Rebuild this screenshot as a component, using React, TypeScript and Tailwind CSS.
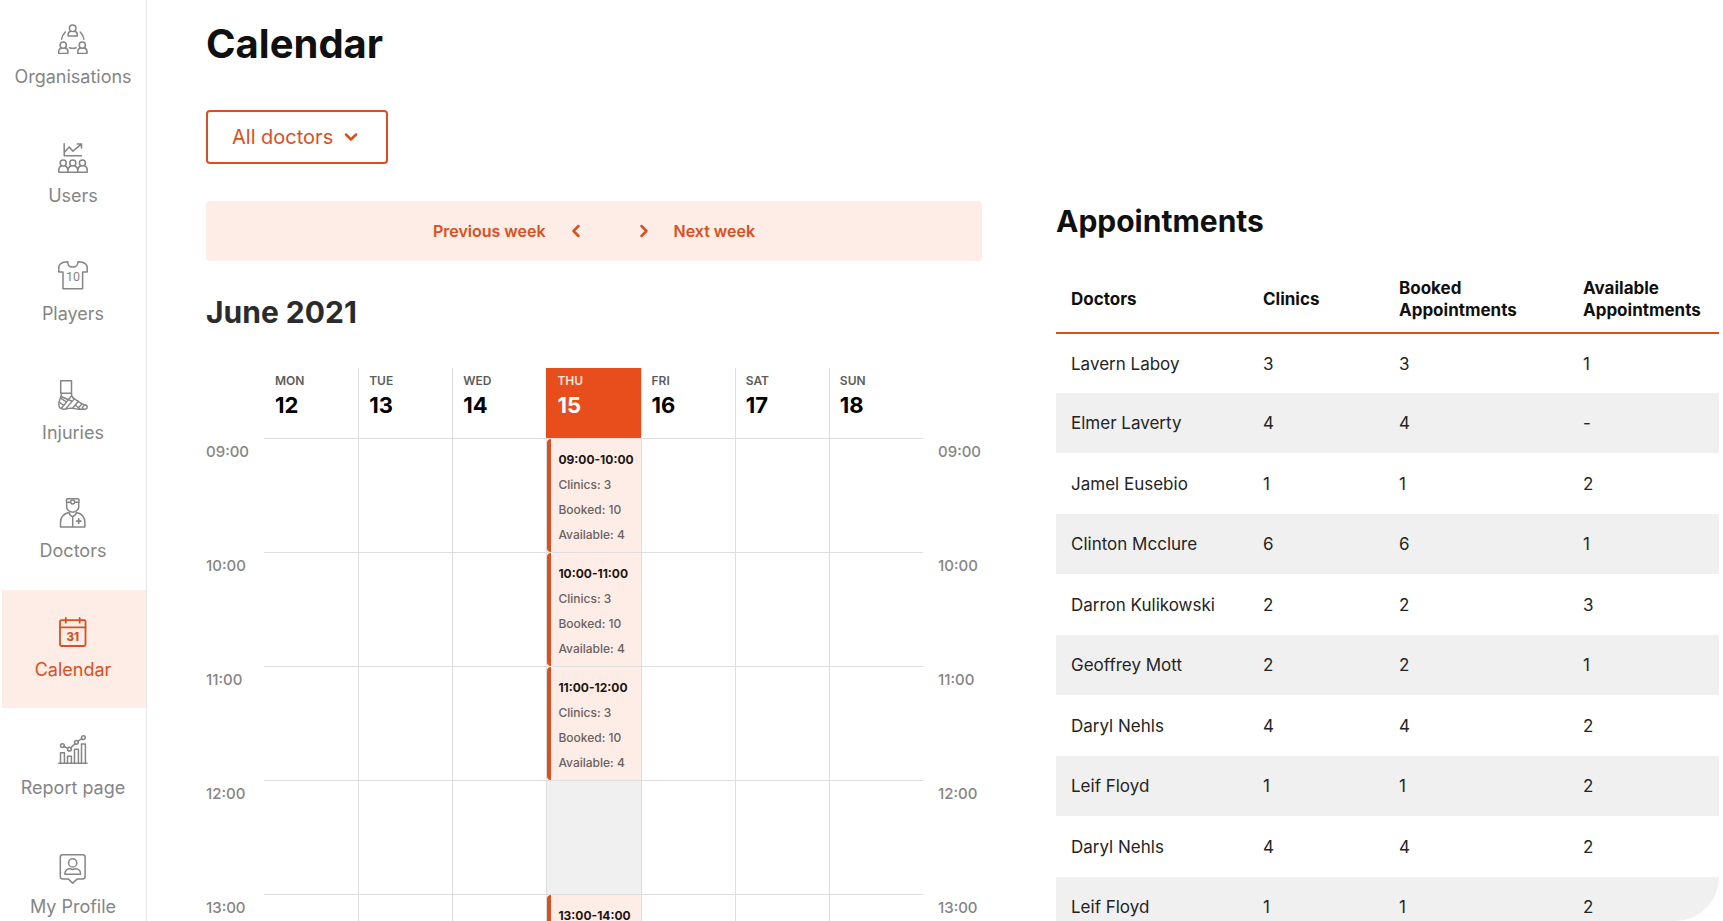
import React from "react";
import { ChevronDown, ChevronLeft, ChevronRight } from "lucide-react";

function Icon({ children }: { children: React.ReactNode }) {
  return (
    <svg
      viewBox="0 0 30 30"
      className="size-[30px]"
      fill="none"
      stroke="currentColor"
      strokeWidth="1.5"
      strokeLinecap="round"
      strokeLinejoin="round"
      aria-hidden="true"
    >
      {children}
    </svg>
  );
}

const OrganisationsIcon = () => (
  <Icon>
    <circle cx="14.7" cy="4.2" r="3.3" />
    <path d="M12.8 7.2c-1.8.5-2.700 1.600-2.700 3.200v1.600h9.200v-1.600c0-1.600-.9-2.700-2.700-3.200" />
    <circle cx="5.2" cy="21.2" r="3.1" />
    <path d="M3.4 24c-1.8.5-2.7 1.8-2.7 3.4v2h9.200v-2c0-1.600-.9-2.900-2.700-3.400" />
    <circle cx="24.3" cy="21.2" r="3.1" />
    <path d="M22.500 24c-1.800.5-2.700 1.800-2.700 3.400v2H29v-2c0-1.600-.9-2.900-2.700-3.400" />
    <path d="M7.300 8C5.300 10 4 12.500 3.600 15.200M22.200 8c2 2 3.300 4.500 3.700 7.200M11.300 23.800c2.200.7 4.700.7 6.900 0" />
  </Icon>
);

const UsersIcon = () => (
  <Icon>
    <path d="M6.200.8v12h17.300" />
    <path d="M6.700 9l4.600-5 3.600 4.200 8.400-7M19.300.9h4.200v4" />
    <circle cx="5.200" cy="20" r="3" />
    <circle cx="14.800" cy="20" r="3" />
    <circle cx="24.400" cy="20" r="3" />
    <path d="M3.500 22.700C1.600 23.500.8 25 .8 27v2.200h28.400V27c0-2-.8-3.500-2.700-4.300M7 22.700c1.800.8 2.800 2.300 2.900 4.300v2.200M13.100 22.700c-1.900.8-2.900 2.100-3.200 4.300M16.600 22.700c1.900.8 2.900 2.100 3.200 4.300v2.200M22.700 22.700c-1.900.8-2.700 2.100-2.900 4.300" />
  </Icon>
);

const PlayersIcon = () => (
  <Icon>
    <path d="M9.700.8 5.600 1.300C3.300 2 1.300 3.600.8 5.600V11H5v16.700h19.600V11h4.600V5.600c-.5-2-2.500-3.600-4.800-4.300L20 .8c0 3.300-2 5.300-5.200 5.300S9.700 4.100 9.700.8z" />
    <text
      x="15"
      y="20.300"
      textAnchor="middle"
      fontSize="12.500"
      fill="currentColor"
      stroke="none"
      className="font-['Liberation_Sans_Narrow','Roboto',sans-serif]"
    >
      10
    </text>
  </Icon>
);

const InjuriesIcon = () => (
  <Icon>
    <path d="M2.700.8h10.800v12.400H2.700z" />
    <g strokeWidth="1.400">
      <path d="M3.500 13.200c0 3.800-2.700 7.300-2.700 11 0 3.400 2.200 5 5.200 5 3.300 0 3.700-1 6.300-1h1.700c2 0 4 1 7 1h5.200c1.800 0 3-.9 3-2.200 0-1.300-1-2-2.500-2.200-4.700-1.300-7.400-4.400-10.400-6-1.800-1-2.900-2.300-2.900-5.600" />
      <path d="M3 16.500l10.500 4.500M13.400 16l-10 12.300M16.300 18.900l-8.600 9.800M2.500 18.200l6 3.700M1.200 22l4.500 3.500M20.300 21.300l-5.700 6.900M17.300 25l4.500 4M24.200 23.700l-4 4.200M26.500 25l-2.200 2.600.8 1.600" />
    </g>
  </Icon>
);

const DoctorsIcon = () => (
  <Icon>
    <path d="M8.700 4.300 8.300 2.200c0-.9.700-1.500 1.700-1.500h9.400c1 0 1.700.6 1.700 1.500l-.4 2.100M8.700 4.300h3.800M16.900 4.300h3.800" />
    <circle cx="14.700" cy="4" r="2" />
    <path d="M8.700 4.300v5.200c0 1 .6 2 1.500 2.800 1.300 1.300 2.900 1.900 4.500 1.900s3.200-.6 4.500-1.900c.9-.8 1.500-1.800 1.500-2.800V4.300" />
    <path d="M11 14.500c-5 1-8.500 4.700-8.500 10.200v4.200h24.400v-4.200c0-5.500-3.500-9.200-8.500-10.200M11 14.500c.6 2.200 1.800 3.600 3.700 4 1.900-.4 3.100-1.800 3.700-4M14.700 18.500v10.400" />
    <path d="M20.700 20.900v4.400M18.500 23.100h4.400" strokeWidth="1.700" />
  </Icon>
);

const CalendarIcon = () => (
  <Icon>
    <g strokeWidth="1.800">
      <rect x="2" y="3.200" width="25.500" height="25.800" rx="1.500" />
      <path d="M2 10.300h25.500M7.800.9v4.800M21.700.9v4.800" />
    </g>
    <text
      x="14.800"
      y="24"
      textAnchor="middle"
      fontSize="11.500"
      fontWeight="800"
      fill="currentColor"
      stroke="none"
    >
      31
    </text>
  </Icon>
);

const ReportIcon = () => (
  <Icon>
    <path d="M.8 28.300h28.200M2.500 28V17.800h3.900V28M9.500 28v-6.800h3.900V28M16.500 28V14.300h3.900V28M23.500 28V9h3.900v19" />
    <circle cx="4.400" cy="10.600" r="1.900" />
    <circle cx="11.400" cy="14.200" r="1.900" />
    <circle cx="18.400" cy="7.300" r="1.900" />
    <circle cx="25.400" cy="2.700" r="1.900" />
    <path d="M6.100 11.500l3.600 1.800M12.800 12.900l4.200-4.200M20 6.200l3.800-2.500" />
  </Icon>
);

const ProfileIcon = () => (
  <Icon>
    <path d="M4.700.8h20c1.500 0 2.400.9 2.400 2.400v19.300c0 1.500-.9 2.400-2.400 2.400h-5.400l-4.600 4.200-4.600-4.200H4.700c-1.500 0-2.400-.9-2.400-2.400V3.200C2.300 1.700 3.200.8 4.700.8z" />
    <circle cx="14.700" cy="8.900" r="4.100" />
    <path d="M6.900 20.300v-.9c0-3.200 2.800-4.700 5-4.700.9 0 1.500.7 2.800.7s1.900-.7 2.800-.7c2.200 0 5 1.500 5 4.700v.9z" />
  </Icon>
);

const navItems = [
  { label: "Organisations", icon: OrganisationsIcon },
  { label: "Users", icon: UsersIcon },
  { label: "Players", icon: PlayersIcon },
  { label: "Injuries", icon: InjuriesIcon },
  { label: "Doctors", icon: DoctorsIcon },
  { label: "Calendar", icon: CalendarIcon, active: true },
  { label: "Report page", icon: ReportIcon },
  { label: "My Profile", icon: ProfileIcon },
];

const days = [
  { name: "MON", date: 12 },
  { name: "TUE", date: 13 },
  { name: "WED", date: 14 },
  { name: "THU", date: 15, today: true },
  { name: "FRI", date: 16 },
  { name: "SAT", date: 17 },
  { name: "SUN", date: 18 },
];

const hours = [
  { time: "09:00", slot: "09:00-10:00" },
  { time: "10:00", slot: "10:00-11:00" },
  { time: "11:00", slot: "11:00-12:00" },
  { time: "12:00", slot: null },
  { time: "13:00", slot: "13:00-14:00" },
];

const doctors = [
  ["Lavern Laboy", "3", "3", "1"],
  ["Elmer Laverty", "4", "4", "-"],
  ["Jamel Eusebio", "1", "1", "2"],
  ["Clinton Mcclure", "6", "6", "1"],
  ["Darron Kulikowski", "2", "2", "3"],
  ["Geoffrey Mott", "2", "2", "1"],
  ["Daryl Nehls", "4", "4", "2"],
  ["Leif Floyd", "1", "1", "2"],
  ["Daryl Nehls", "4", "4", "2"],
  ["Leif Floyd", "1", "1", "2"],
];

function Sidebar() {
  return (
    <nav className="w-[147px] shrink-0 border-r border-[#e6e6e6] pl-0.5">
      <ul className="-mt-[3px]">
        {navItems.map(({ label, icon: Glyph, active }) => (
          <li key={label} className="odd:h-[119px] even:h-[118px]">
            <a
              href="#"
              aria-current={active ? "page" : undefined}
              className={`flex h-full flex-col items-center gap-[11px] pt-[27px] pr-0.5 text-lg leading-6 whitespace-nowrap ${
                active ? "bg-[#feece6] text-[#d9501e]" : "text-[#858585]"
              }`}
            >
              <Glyph />
              {label}
            </a>
          </li>
        ))}
      </ul>
    </nav>
  );
}

function Slot({ time }: { time: string }) {
  return (
    <button
      type="button"
      className="flex size-full flex-col rounded-l-sm border-l-4 border-[#d9501e] bg-[#feece6] pt-2 pl-[7px] text-left text-xs leading-[25px] font-medium whitespace-nowrap text-[#6b615e]"
    >
      <span className="font-bold text-[#1c1412]">{time}</span>
      <span>Clinics: 3</span>
      <span>Booked: 10</span>
      <span>Available: 4</span>
    </button>
  );
}

function WeekGrid() {
  return (
    <div className="mt-[34px]">
      <div className="grid grid-cols-[58px_repeat(7,minmax(0,1fr))_59px]">
        <div />
        {days.map((day, i) => (
          <div
            key={day.name}
            className={`h-[70px] ${i > 0 ? "border-l pl-2.5" : "pl-[11px]"} ${
              day.today ? "border-[#e84e1b] bg-[#e84e1b] text-white" : "border-[#dedede] text-black"
            }`}
          >
            <div
              className={`pt-1 text-xs leading-[18px] font-semibold ${
                day.today ? "text-[#ffe6dd]" : "text-[#5c5c5c]"
              }`}
            >
              {day.name}
            </div>
            <div className="text-[22px] leading-[30px] font-bold">{day.date}</div>
          </div>
        ))}
        <div />
      </div>
      {hours.map(({ time, slot }) => (
        <div key={time} className="grid h-[114px] grid-cols-[58px_repeat(7,minmax(0,1fr))_59px]">
          <div className="pt-0.5 text-[15px] leading-6 font-medium text-[#858585]">{time}</div>
          {days.map((day, i) => (
            <div
              key={day.name}
              className={`border-t border-[#dedede] ${i > 0 ? "border-l" : ""} ${
                day.today && !slot ? "bg-[#f0f0f0]" : ""
              }`}
            >
              {day.today && slot && <Slot time={slot} />}
            </div>
          ))}
          <div className="pt-0.5 pl-[15px] text-[15px] leading-6 font-medium text-[#858585]">{time}</div>
        </div>
      ))}
    </div>
  );
}

function Appointments() {
  return (
    <section className="overflow-hidden rounded-br-[44px] pt-[199px]">
      <h2 className="text-[30px] leading-[44px] font-bold text-[#101010]">Appointments</h2>
      <table className="mt-[23px] w-full table-fixed border-separate border-spacing-0 text-left">
        <thead>
          <tr className="h-[66px] text-[17px] leading-[22px] text-[#101010]">
            <th className="w-[192px] pl-[15px] font-bold">Doctors</th>
            <th className="w-[136px] pl-[15px] font-bold">Clinics</th>
            <th className="w-[184px] pl-[15px] font-bold">
              Booked
              <br />
              Appointments
            </th>
            <th className="pl-[15px] font-bold">
              Available
              <br />
              Appointments
            </th>
          </tr>
        </thead>
        <tbody className="[&>tr:first-child>td]:border-t-2 [&>tr:first-child>td]:border-[#d9501e]">
          {doctors.map((row, r) => (
            <tr key={r} className="text-[17px] text-[#242424] odd:h-[61px] even:h-[60px] even:bg-[#f0f0f0]">
              {row.map((value, c) => (
                <td key={c} className="pt-0.5 pl-[15px]">
                  {value}
                </td>
              ))}
            </tr>
          ))}
        </tbody>
      </table>
    </section>
  );
}

export default function App() {
  return (
    <div className="flex h-screen overflow-hidden bg-white font-['Inter',sans-serif]">
      <Sidebar />
      <main className="grid min-w-0 flex-1 grid-cols-[776fr_663fr] grid-rows-[minmax(0,1fr)] gap-[74px] pr-1 pl-[59px]">
        <section>
          <h1 className="pt-5 text-[40px] leading-[48px] font-bold text-[#101010]">Calendar</h1>
          <div className="relative mt-[42px] w-[182px]">
            <select
              aria-label="Doctor"
              className="h-[54px] w-full appearance-none rounded border-2 border-[#d9501e] bg-white pb-px pl-6 text-xl text-[#d9501e]"
            >
              <option>All doctors</option>
            </select>
            <ChevronDown
              className="pointer-events-none absolute top-[17px] right-[27px] size-5 text-[#d9501e]"
              strokeWidth={3}
            />
          </div>
          <div className="mt-[37px] flex h-[60px] items-center justify-center gap-12 rounded-sm bg-[#feece6] font-semibold text-[#d9501e]">
            <button type="button" className="flex items-center gap-5">
              Previous week
              <ChevronLeft className="size-5" strokeWidth={3} />
            </button>
            <button type="button" className="flex items-center gap-5">
              <ChevronRight className="size-5" strokeWidth={3} />
              Next week
            </button>
          </div>
          <h2 className="mt-[29px] text-[30px] leading-[44px] font-bold text-[#2b2b2b]">June 2021</h2>
          <WeekGrid />
        </section>
        <Appointments />
      </main>
    </div>
  );
}
